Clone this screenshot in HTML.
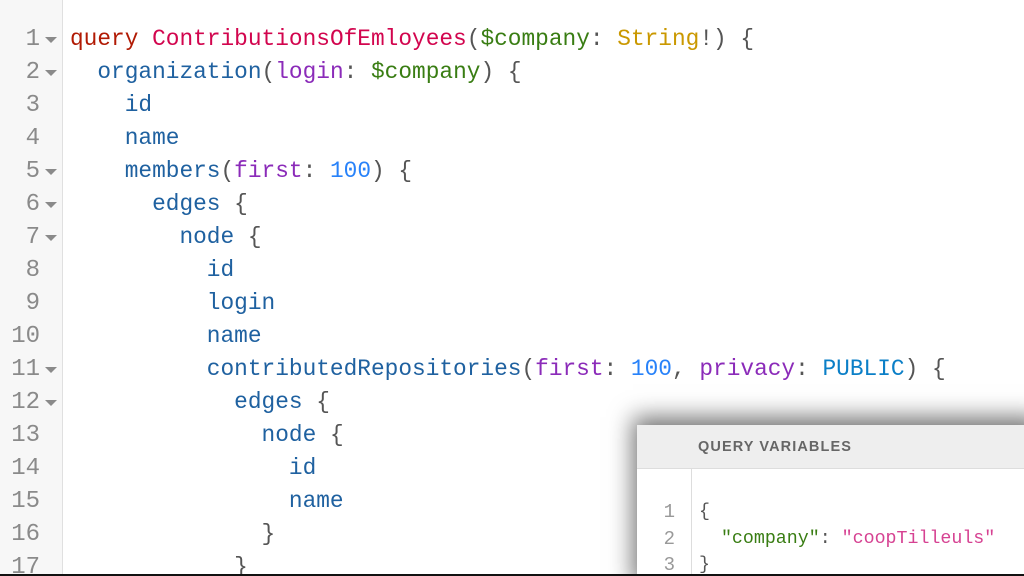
<!DOCTYPE html>
<html><head><meta charset="utf-8"><style>
html,body{margin:0;padding:0;width:1024px;height:576px;overflow:hidden;background:#fff;position:relative;font-family:"Liberation Mono",monospace}
.gut{position:absolute;left:0;top:0;width:62px;height:576px;background:#f7f7f7;border-right:1px solid #e0e0e0}
.ln{position:absolute;left:0;width:62px;font-size:24px;line-height:33px;color:#8a8a8a;margin-top:2px}
.ln span{position:absolute;right:22px}
.ln i{position:absolute;left:45px;top:14px;width:0;height:0;border-left:6px solid transparent;border-right:6px solid transparent;border-top:6px solid #8a8a8a}
.code{position:absolute;left:70px;top:23px;font-size:22.8px;line-height:33px;white-space:pre;color:#1f61a0}
.k{color:#b11a04}.d{color:#d2054e}.v{color:#397d13}.t{color:#ca9800}.a{color:#8b2bb9}.n{color:#2882f9}.e{color:#0b7fc7}.p{color:#555}
.panel{position:absolute;left:637px;top:425px;width:400px;height:160px;background:#fff;box-shadow:0 -4px 22px 4px rgba(0,0,0,.55)}
.ph{height:43px;background:#eeeeee;border-bottom:1px solid #ddd;font-family:"Liberation Sans",sans-serif;font-weight:bold;font-size:14.5px;letter-spacing:1.1px;color:#666;line-height:45px;padding-left:61px}
.pg{position:absolute;left:0;top:44px;width:54px;height:120px;background:#fff;border-right:1px solid #ddd}
.pn{position:absolute;left:0;top:74px;width:38px;text-align:right;font-size:19px;line-height:26.5px;color:#999;white-space:pre}
.pc{position:absolute;left:62px;top:74px;font-size:18.3px;line-height:26.5px;white-space:pre;color:#555}
.s{color:#d64292}
.bar{position:absolute;left:0;bottom:0;width:1024px;height:2px;background:#111}
</style></head><body>
<div class="gut"></div>
<div class="ln" style="top:21px"><span>1</span><i></i></div>
<div class="ln" style="top:54px"><span>2</span><i></i></div>
<div class="ln" style="top:87px"><span>3</span></div>
<div class="ln" style="top:120px"><span>4</span></div>
<div class="ln" style="top:153px"><span>5</span><i></i></div>
<div class="ln" style="top:186px"><span>6</span><i></i></div>
<div class="ln" style="top:219px"><span>7</span><i></i></div>
<div class="ln" style="top:252px"><span>8</span></div>
<div class="ln" style="top:285px"><span>9</span></div>
<div class="ln" style="top:318px"><span>10</span></div>
<div class="ln" style="top:351px"><span>11</span><i></i></div>
<div class="ln" style="top:384px"><span>12</span><i></i></div>
<div class="ln" style="top:417px"><span>13</span></div>
<div class="ln" style="top:450px"><span>14</span></div>
<div class="ln" style="top:483px"><span>15</span></div>
<div class="ln" style="top:516px"><span>16</span></div>
<div class="ln" style="top:549px"><span>17</span></div>
<div class="code"><span class="k">query</span> <span class="d">ContributionsOfEmloyees</span><span class="p">(</span><span class="v">$company</span><span class="p">:</span> <span class="t">String</span><span class="p">!) {</span>
  organization<span class="p">(</span><span class="a">login</span><span class="p">:</span> <span class="v">$company</span><span class="p">) {</span>
    id
    name
    members<span class="p">(</span><span class="a">first</span><span class="p">:</span> <span class="n">100</span><span class="p">) {</span>
      edges <span class="p">{</span>
        node <span class="p">{</span>
          id
          login
          name
          contributedRepositories<span class="p">(</span><span class="a">first</span><span class="p">:</span> <span class="n">100</span><span class="p">,</span> <span class="a">privacy</span><span class="p">:</span> <span class="e">PUBLIC</span><span class="p">) {</span>
            edges <span class="p">{</span>
              node <span class="p">{</span>
                id
                name
              <span class="p">}</span>
            <span class="p">}</span></div>
<div class="panel">
<div class="ph">QUERY VARIABLES</div>
<div class="pg"></div>
<div class="pn">1
2
3</div>
<div class="pc">{
  <span class="v">"company"</span>: <span class="s">"coopTilleuls"</span>
}</div>
</div>
<div class="bar"></div>
</body></html>
